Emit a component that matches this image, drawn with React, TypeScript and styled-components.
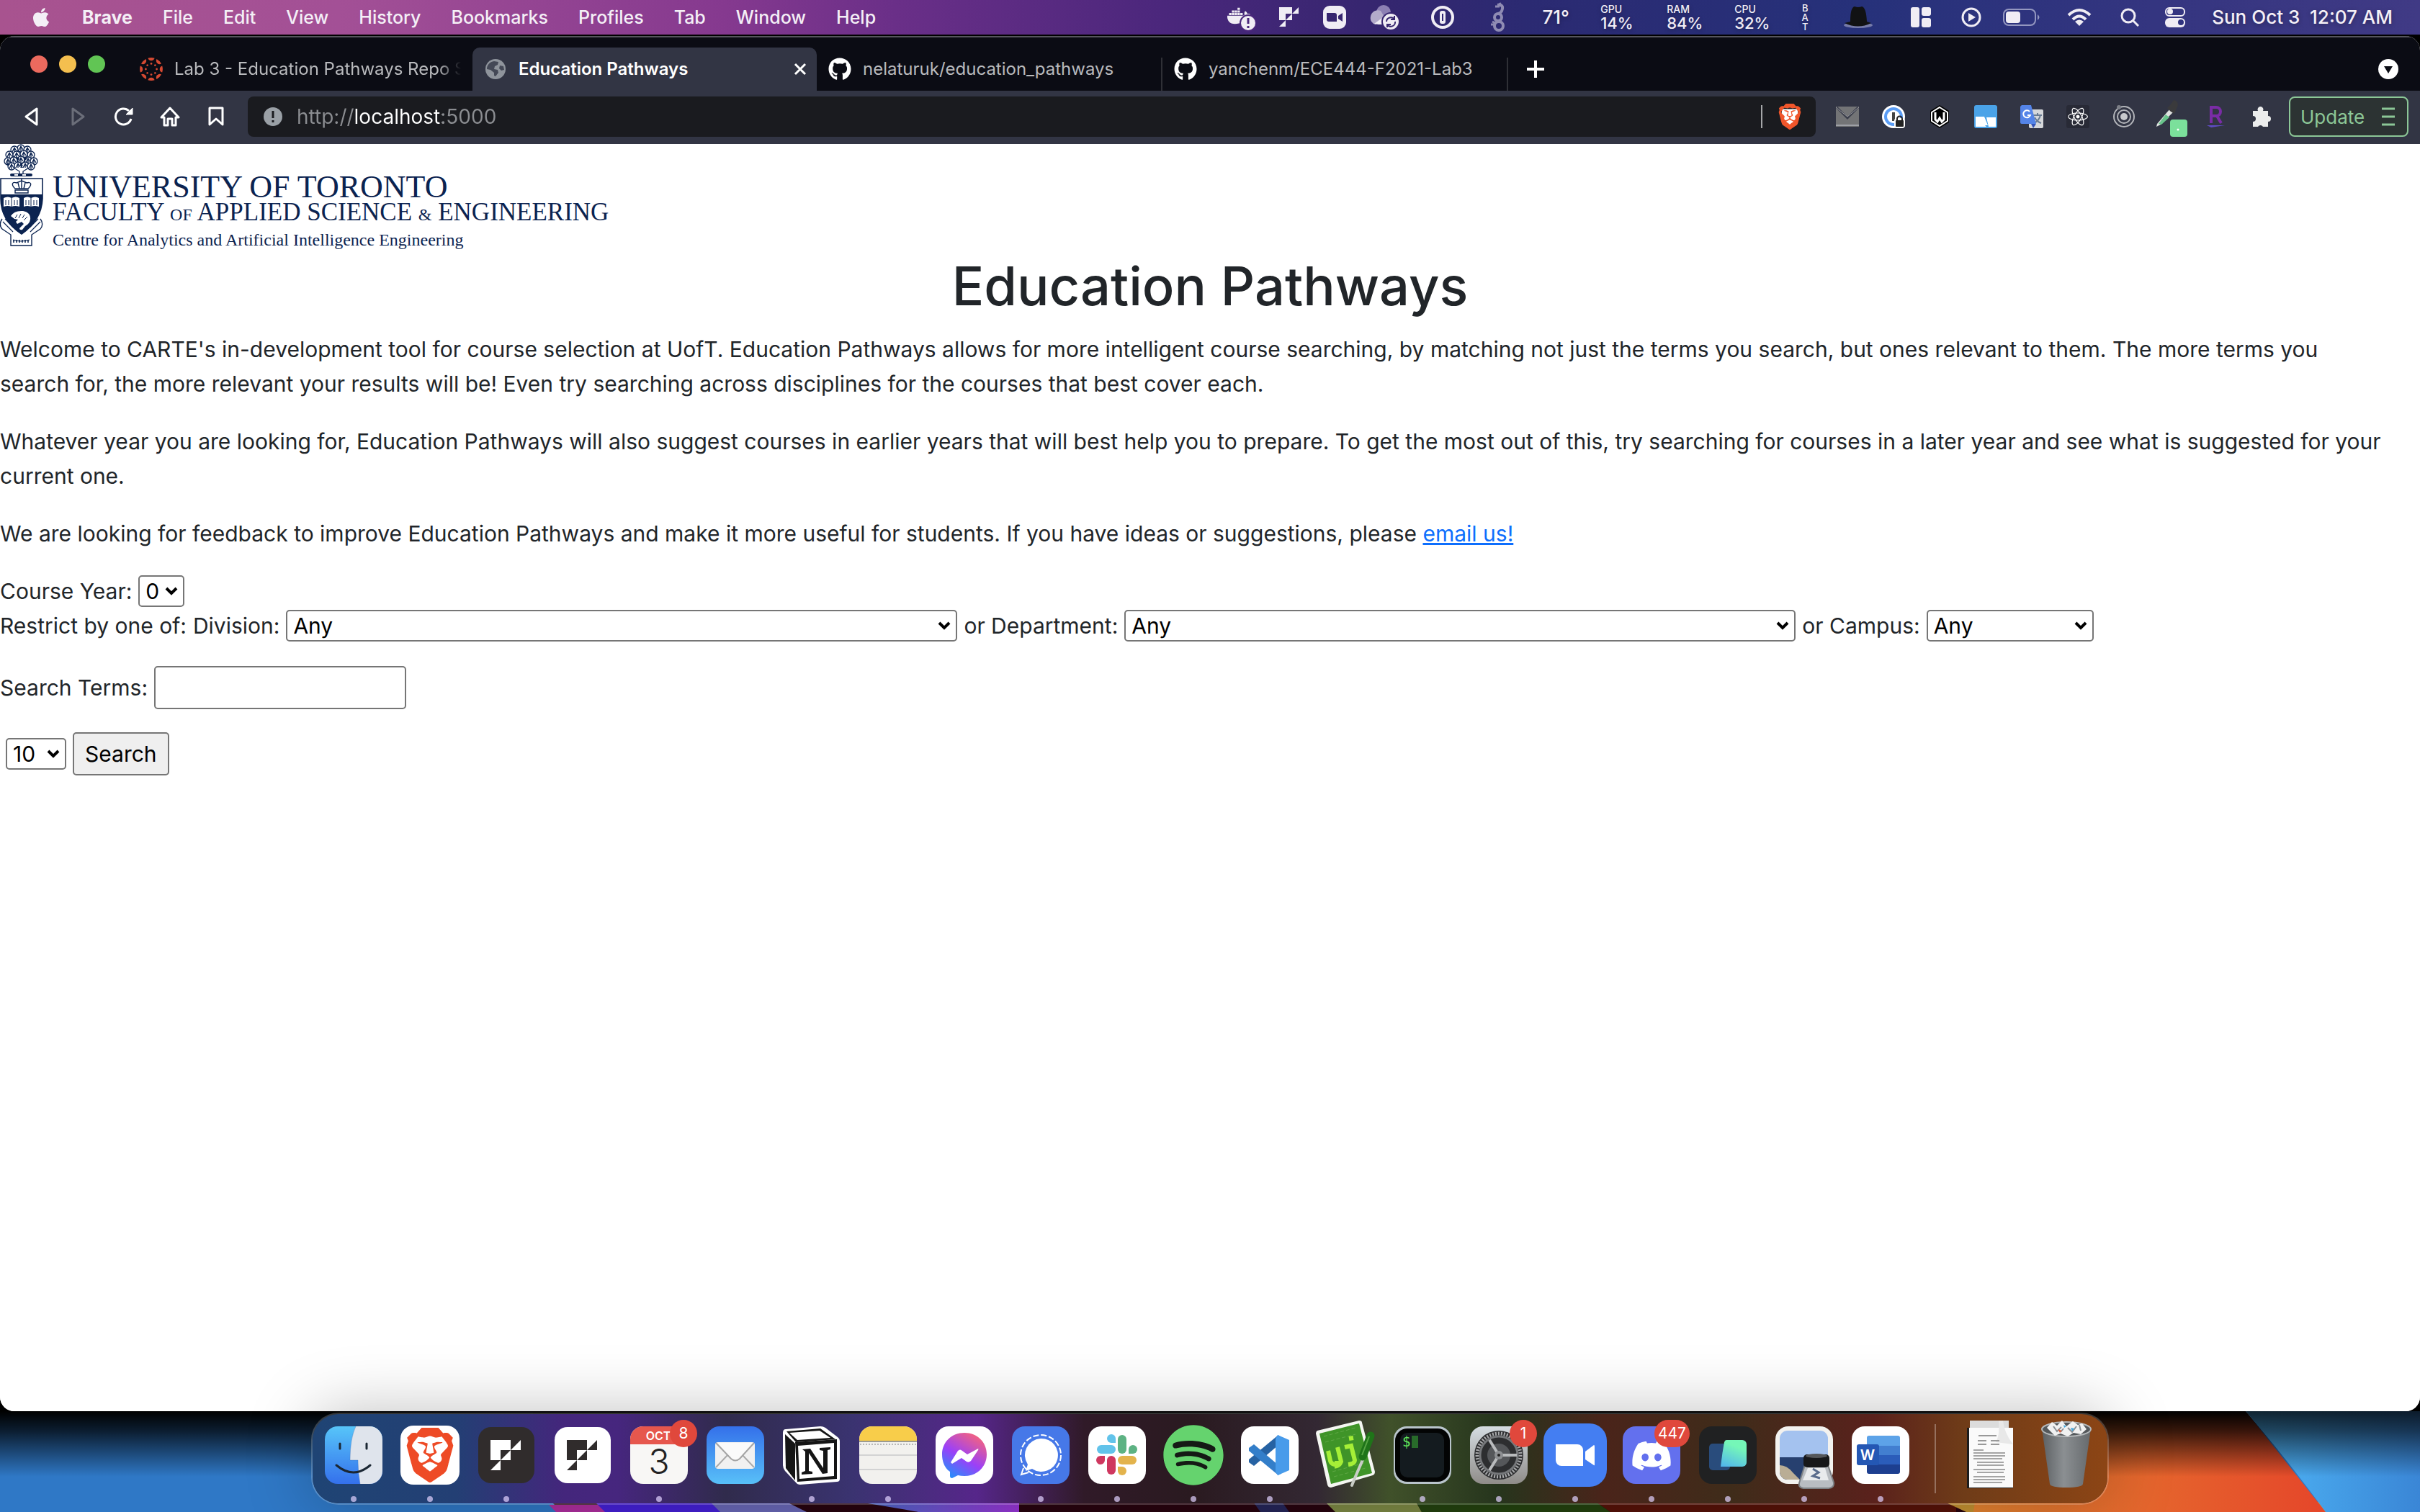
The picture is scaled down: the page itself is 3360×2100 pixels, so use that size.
import React from "react";
import styled, { createGlobalStyle } from "styled-components";
import { FaApple, FaGithub, FaSpotify, FaDiscord, FaReact, FaDocker } from "react-icons/fa";
import { SiBrave } from "react-icons/si";

const SANS = 'Inter, "Noto Sans", "Liberation Sans", sans-serif';
const SERIF = '"Liberation Serif", "DejaVu Serif", serif';
const NAVY = "#0b2350";

const GlobalStyle = createGlobalStyle`
  *, *::before, *::after { box-sizing: border-box; }
  html, body { margin: 0; background: #05070d; }
  body { font-family: ${SANS}; }
  button, input, select { font: inherit; color: inherit; margin: 0; }
  button { background: none; border: 0; padding: 0; cursor: default; }
  svg { display: block; flex: none; }
`;

/* ---------- desktop ---------- */

const Desktop = styled.div`
  min-height: 100vh;
  display: grid;
  grid-template-rows: auto 1fr auto;
  background: #000;
  isolation: isolate;
`;

const MenuBar = styled.header`
  height: 48px;
  display: flex;
  align-items: stretch;
  justify-content: space-between;
  margin-bottom: 2px;
  padding: 0 38px 0 42px;
  color: #f4eff6;
  font-size: 26px;
  line-height: 46px;
  text-shadow: 0 2px 6px rgba(0, 0, 0, 0.3);
  background: linear-gradient(
    90deg,
    #a8538f 0%,
    #a35096 14%,
    #85398f 30%,
    #6a2f88 37%,
    #4b277c 48%,
    #35266f 57%,
    #2b2a72 63%,
    #26317a 77%,
    #343580 89%,
    #403a85 100%
  );
`;

const Menus = styled.nav`
  display: flex;
  align-items: center;
  gap: 42px;
`;

const MenuButton = styled.button<{ $bold?: boolean }>`
  font-size: 25px;
  font-weight: ${(p) => (p.$bold ? 700 : 500)};
`;

const Status = styled.div`
  display: flex;
  align-items: center;
  font-weight: 500;
`;

const StatusItem = styled.div<{ $width: number; $faded?: boolean }>`
  width: ${(p) => p.$width}px;
  height: 46px;
  display: flex;
  align-items: center;
  justify-content: center;
  white-space: nowrap;
  opacity: ${(p) => (p.$faded ? 0.5 : 1)};
`;

const Gauge = styled.div`
  display: flex;
  flex-direction: column;
  width: 50px;
  font-size: 22px;
  line-height: 22px;
  small {
    font-size: 14px;
    line-height: 16px;
  }
`;

const Stacked = styled.div`
  display: flex;
  flex-direction: column;
  align-items: center;
  font-size: 13px;
  line-height: 13px;
`;

const Clock = styled.time`
  padding-left: 18px;
  white-space: pre;
`;

/* ---------- browser window ---------- */

const Window = styled.main`
  display: flex;
  flex-direction: column;
  border-radius: 20px;
  overflow: hidden;
  background: #fff;
`;

const TabStrip = styled.div`
  height: 76px;
  display: flex;
  align-items: flex-end;
  background: #0b0c14;
  border-top: 2px solid #55555c;
`;

const Lights = styled.div`
  height: 74px;
  width: 178px;
  display: flex;
  align-items: center;
  gap: 16px;
  padding-left: 42px;
`;

const Light = styled.button<{ $color: string }>`
  width: 24px;
  height: 24px;
  border-radius: 50%;
  background: ${(p) => p.$color};
`;

const Tab = styled.div<{ $active?: boolean }>`
  width: 478px;
  height: 60px;
  display: flex;
  align-items: center;
  padding: 0 ${(p) => (p.$active ? 14 : 16)}px 0 ${(p) => (p.$active ? 18 : 16)}px;
  gap: ${(p) => (p.$active ? 18 : 16)}px;
  border-radius: 10px 10px 0 0;
  color: ${(p) => (p.$active ? "#fff" : "#b9babd")};
  background: ${(p) => (p.$active ? "#323544" : "transparent")};
`;

const TabTitle = styled.button<{ $fade?: boolean; $strong?: boolean }>`
  flex: 1;
  min-width: 0;
  overflow: hidden;
  text-align: left;
  white-space: nowrap;
  font-size: 24px;
  line-height: 32px;
  font-weight: ${(p) => (p.$strong ? 600 : 400)};
  mask-image: ${(p) => (p.$fade ? "linear-gradient(90deg, #000 92%, transparent)" : "none")};
`;

const TabRule = styled.span`
  width: 2px;
  height: 46px;
  background: #2f3036;
`;

const StripEnd = styled.div`
  flex: 1;
  height: 60px;
  display: flex;
  align-items: center;
  justify-content: space-between;
  padding: 0 30px 0 26px;
`;

const Toolbar = styled.div`
  height: 74px;
  display: flex;
  align-items: center;
  padding: 0 16px 2px 12px;
  background: #323544;
`;

const ToolButton = styled.button`
  width: 64px;
  height: 56px;
  display: flex;
  align-items: center;
  justify-content: center;
`;

const AddressBar = styled.div`
  flex: 1;
  height: 56px;
  display: flex;
  align-items: center;
  margin: 0 12px;
  padding: 0 18px 0 22px;
  gap: 20px;
  border-radius: 8px;
  background: #1a1b1f;
`;

const Address = styled.input`
  flex: 1;
  min-width: 0;
  height: 40px;
  padding: 0;
  border: 0;
  outline: 0;
  font-size: 28px;
  -webkit-text-fill-color: transparent;
  background: linear-gradient(90deg, #8b8d91 0 80px, #fff 80px 202px, #8b8d91 202px);
  -webkit-background-clip: text;
  background-clip: text;
`;

const AddressRule = styled.span`
  width: 2px;
  height: 32px;
  background: #a5a6a9;
`;

const UpdateButton = styled.button`
  height: 56px;
  width: 166px;
  display: flex;
  align-items: center;
  justify-content: space-between;
  padding: 0 16px 0 14px;
  margin-left: 5px;
  border: 2px solid #8cc797;
  border-radius: 8px;
  color: #8cc797;
  background: #2c3333;
  font-size: 26px;
`;

/* ---------- page ---------- */

const Page = styled.div`
  flex: 1;
  background: #fff;
  color: #212529;
  font-size: 30px;
  line-height: 48px;
`;

const Logo = styled.div`
  height: 149px;
  display: flex;
  gap: 13px;
  color: ${NAVY};
  font-family: ${SERIF};
`;

const LogoLines = styled.div`
  display: flex;
  flex-direction: column;
  padding-top: 42px;
  white-space: nowrap;
`;

const LogoLine = styled.span<{ $size: number }>`
  font-size: ${(p) => p.$size}px;
  line-height: 35px;
  small {
    font-size: 24px;
  }
`;

const Title = styled.h1`
  margin: 0 0 16px;
  font-size: 74px;
  line-height: 96px;
  font-weight: 500;
  text-align: center;
`;

const Paragraph = styled.p`
  margin: 0 0 32px;
  padding-right: 40px;
`;

const Link = styled.a`
  color: #0d6efd;
`;

const FormRow = styled.div<{ $gapAfter?: boolean; $indent?: boolean }>`
  display: flex;
  align-items: center;
  gap: 9px;
  min-height: 48px;
  margin-bottom: ${(p) => (p.$gapAfter ? 32 : 0)}px;
  padding-left: ${(p) => (p.$indent ? 8 : 0)}px;
  white-space: nowrap;
`;

const SelectBox = styled.span<{ $width: number }>`
  width: ${(p) => p.$width}px;
  display: grid;
  align-items: center;
  > * {
    grid-area: 1 / 1;
  }
  svg {
    justify-self: end;
    margin-right: 8px;
    pointer-events: none;
  }
`;

const Select = styled.select`
  width: 100%;
  height: 44px;
  padding: 0 8px;
  line-height: 40px;
  appearance: none;
  border: 2px solid #767676;
  border-radius: 5px;
  background: #fff;
  color: #000;
`;

const TextBox = styled.input`
  width: 350px;
  height: 60px;
  padding: 2px 4px;
  border: 2px solid #767676;
  border-radius: 5px;
  background: #fff;
`;

const SubmitButton = styled.button`
  height: 60px;
  padding: 0 15px;
  border: 2px solid #767676;
  border-radius: 5px;
  background: #efefef;
  color: #000;
`;

/* ---------- dock ---------- */

const DockArea = styled.footer`
  height: 140px;
  display: grid;
  justify-items: center;
  > * {
    grid-area: 1 / 1;
  }
`;

const Wallpaper = styled.svg`
  width: 100%;
  height: 140px;
  z-index: -1;
`;

const Dock = styled.div`
  height: 128px;
  margin-top: 2px;
  display: flex;
  padding: 0 4px;
  border: 2px solid rgba(255, 255, 255, 0.2);
  border-radius: 38px;
  box-shadow: 0 0 90px rgba(0, 0, 0, 0.26);
  background: linear-gradient(
    90deg,
    #1f4474 0%,
    #233f74 8%,
    #44267c 14%,
    #46267e 17%,
    #302b4c 23%,
    #3a3370 30%,
    #56268a 37%,
    #301a28 43%,
    #2a1a20 49%,
    #332833 56%,
    #40512a 60%,
    #26351d 66%,
    #4a241a 72%,
    #3f2c1a 79%,
    #5a211c 87%,
    #6f3c18 92%,
    #8c4515 100%
  );
  background-clip: padding-box;
  background-color: #14121a;
`;

const DockItem = styled.button`
  position: relative;
  width: 106px;
  display: flex;
  flex-direction: column;
  align-items: center;
  justify-content: flex-start;
  padding-top: 9px;
`;

const Running = styled.span`
  width: 8px;
  height: 8px;
  margin-top: 9px;
  border-radius: 50%;
  background: rgba(225, 210, 255, 0.7);
`;

const Badge = styled.span`
  position: absolute;
  top: 8px;
  right: 0;
  min-width: 38px;
  height: 38px;
  padding: 0 5px;
  border-radius: 19px;
  background: #e0483c;
  color: #fff;
  font-size: 21px;
  line-height: 38px;
  text-align: center;
`;

const DockRule = styled.span`
  width: 2px;
  height: 96px;
  margin: 14px 22px 0;
  background: rgba(255, 255, 255, 0.3);
`;

/* ---------- drawings ---------- */

const Glyph = ({ w, h = w, box, children }: any) => (
  <svg width={w} height={h} viewBox={box || `0 0 ${w} ${h}`} fill="none">
    {children}
  </svg>
);

const FMark = ({ x = 0, y = 0, u = 9, color = "#f0edf4" }) => (
  <path
    transform={`translate(${x} ${y}) scale(${u})`}
    fill={color}
    d="M0 0H2V1H1V2H0ZM2 1V2H1ZM3 0V1H2ZM1 2V3H0Z"
  />
);

const Lion = ({ width = 34, x = 0, y = 0, color = "#f1562b" }) => (
  <g transform={`translate(${x} ${y})`}>
    <path transform={`scale(${width / 24})`} fill="#fff" d="M5 5h14l1 6-3 8-5 3-5-3-3-8z" />
    <SiBrave size={width} color={color} />
  </g>
);

const Canvas = () => (
  <Glyph w={32} box="-16 -16 32 32">
    {[0, 45, 90, 135, 180, 225, 270, 315].map((a) => (
      <g key={a} transform={`rotate(${a})`} fill="#d64a32">
        <path d="M-4.6 -15.2A16 16 0 0 1 4.6 -15.2A4.8 4.8 0 0 1 -4.6 -15.2Z" />
        <circle cy="-7.6" r="1.4" />
      </g>
    ))}
  </Glyph>
);

const Globe = () => (
  <Glyph w={28}>
    <circle cx="14" cy="14" r="14" fill="#8f949c" />
    <path d="M12 3l6 1-1 4-4 2-1 4 5 1 1 4-4 5-2-1v-4l-5-4-5-1c0-6 4-10 10-11z" fill="#444856" />
    <path d="M20 9l5 1 1 5-4 1-3-3z" fill="#444856" />
  </Glyph>
);

const Chevron = () => (
  <Glyph w={20} h={14}>
    <path d="M3 3L10 10L17 3" stroke="#000" strokeWidth="4" />
  </Glyph>
);

const Crest = () => {
  const leaves: [number, number][] = [
    [29, 6], [20, 8], [38, 8], [13, 15], [23, 15], [33, 14], [43, 15], [11, 24], [19, 23],
    [29, 22], [39, 23], [47, 24], [16, 31], [25, 30], [35, 30], [43, 31],
  ];
  return (
    <Glyph w={60} h={144}>
      <g stroke={NAVY} strokeWidth="1.3" fill="#fff">
        {leaves.map(([x, y], i) => (
          <g key={i}>
            <circle cx={x} cy={y} r="5" />
            <path d={`M${x - 3} ${y + 3}l3-6 3 5M${x} ${y - 3}v7`} />
          </g>
        ))}
        <path d="M19 33l8 5v5h5v-5l8-5" />
      </g>
      <path d="M22 17l5 3-2 4zM34 18l4 2-4 4zM9 26l5 2-3 3zM29 26l3 4-5 1z" fill={NAVY} />
      <rect x="14" y="41" width="31" height="4" rx="2" fill={NAVY} />
      <path d="M20 43h5M31 43h5" stroke="#fff" strokeWidth="2" />
      <path d="M3 104c-3 4-4 10 0 14l12 8v15h29v-15l12-8c4-4 3-10 0-14" stroke={NAVY} strokeWidth="1.4" fill="#fff" />
      <path d="M4 108l14 14M56 108l-14 14M7 104l12 12M53 104l-12 12M18 133q11 4 23 0" stroke={NAVY} strokeWidth="1.2" />
      <path d="M19 137v-4m4 4v-4m4 4v-4m4 4v-4m4 4v-4m4 4v-4" stroke={NAVY} strokeWidth="1.6" />
      <path d="M1 48H59V76C58 98 46 114 30 125C13 114 1 98 1 76Z" fill="#fff" stroke={NAVY} strokeWidth="1.6" />
      <path d="M1 70H59V76C58 98 46 114 30 125C13 114 1 98 1 76Z" fill={NAVY} />
      <g stroke={NAVY} strokeWidth="1.4">
        <path d="M21 62c-6-6-4-10 2-8l7-3 7 3c6-2 8 2 2 8z" />
        <path d="M21 64h18v4H21zM30 50v12M25 54l2 8M35 54l-2 8M29 49h2" />
      </g>
      <path d="M5 75q6-3 11 0q6-3 11 0v12q-6-2-11 0q-5-2-11 0zM33 75q5-3 10 0q6-3 11 0v12q-6-2-11 0q-5-2-10 0z" fill="#fff" />
      <path d="M16 75v12M43 75v12M8 78v7m4-7v7m8-7v7m4-7v7m12-7v7m4-7v7m7-7v7m4-7v7" stroke={NAVY} strokeWidth="1" />
      <path d="M15 100q5-8 17-7q11 2 10 12q-1 6-7 9l-4 5q-4 1-4-2l6-6-3-3-6 3-2-3 3-3-5-1z" fill="#fff" />
      <path d="M24 98l-3 5M29 97l-3 6M34 98l-3 5M38 101l-5 5" stroke={NAVY} strokeWidth="1" />
    </Glyph>
  );
};

const Seahorse = () => (
  <Glyph w={24} h={42}>
    <g stroke="#f0edf4" strokeWidth="4" fill="none">
      <path d="M11 4q8-1 7 5t-6 7" />
      <circle cx="12" cy="21" r="5" />
      <circle cx="13" cy="33" r="6" />
      <path d="M8 6h6M14 1l2 4M4 27l4 2M2 31h4" strokeWidth="3" />
    </g>
  </Glyph>
);

const StatusIcons = {
  docker: (
    <Glyph w={40}>
      <FaDocker size={32} color="#f0edf4" y={2} />
      <circle cx="29" cy="28" r="11" fill="#f0edf4" stroke="#4b277c" strokeWidth="2" />
      <path d="M29 21v8M29 32v3" stroke="#4b277c" strokeWidth="3" />
    </Glyph>
  ),
  zoom: (
    <Glyph w={32}>
      <rect width="32" height="32" rx="9" fill="#f0edf4" />
      <path d="M5 10h11a3 3 0 0 1 3 3v9H8a3 3 0 0 1-3-3zM21 14l6-4v12l-6-4z" fill="#37266f" />
    </Glyph>
  ),
  cloud: (
    <Glyph w={42} h={36}>
      <circle cx="19" cy="11" r="10" fill="#8d80b3" />
      <path d="M1 17a10 10 0 0 1 14-8l6 10-13 9a9 9 0 0 1-7-11z" fill="#b3abca" />
      <path d="M6 27l15-11 8 4v8H12z" fill="#f0edf4" />
      <circle cx="29" cy="24" r="12" fill="#f0edf4" stroke="#37266f" strokeWidth="2" />
      <path d="M23 24a6 6 0 0 1 11-3m1 3a6 6 0 0 1-11 4M34 16v5h-5M24 32v-4h5" stroke="#37266f" strokeWidth="2" />
    </Glyph>
  ),
  onePassword: (
    <Glyph w={32}>
      <circle cx="16" cy="16" r="14" stroke="#f0edf4" strokeWidth="4" />
      <rect x="12" y="7" width="8" height="18" rx="3" fill="#f0edf4" />
      <path d="M16 11v10" stroke="#2f2672" strokeWidth="2" />
    </Glyph>
  ),
  hat: (
    <Glyph w={42} h={34}>
      <ellipse cx="21" cy="28" rx="20" ry="4" fill="#767baa" />
      <path d="M10 23q0-20 6-21q5 2 10 0q6 1 7 21l6 2q-18 9-37 0z" fill="#111214" />
    </Glyph>
  ),
  layout: (
    <Glyph w={28}>
      <rect width="12" height="28" rx="3" fill="#f0edf4" />
      <rect x="15" width="13" height="12" rx="3" fill="#f0edf4" />
      <rect x="15" y="15" width="13" height="13" rx="3" fill="#f0edf4" />
    </Glyph>
  ),
  play: (
    <Glyph w={28}>
      <circle cx="14" cy="14" r="12" stroke="#f0edf4" strokeWidth="3" />
      <path d="M10 8l10 6-10 6z" fill="#f0edf4" />
    </Glyph>
  ),
  battery: (
    <Glyph w={52} h={24}>
      <rect x="1" y="1" width="44" height="22" rx="7" stroke="#9497c0" strokeWidth="2" />
      <rect x="4" y="4" width="20" height="16" rx="4" fill="#f0edf4" />
      <path d="M48 8q5 4 0 8z" fill="#9497c0" />
    </Glyph>
  ),
  wifi: (
    <Glyph w={34} h={26}>
      <path d="M2 10q15-14 30 0M8 16q9-9 18 0" stroke="#f0edf4" strokeWidth="4" />
      <path d="M11 19q6-5 12 0l-6 6z" fill="#f0edf4" />
    </Glyph>
  ),
  search: (
    <Glyph w={26}>
      <circle cx="11" cy="11" r="9" stroke="#f0edf4" strokeWidth="3" />
      <path d="M17 17l8 8" stroke="#f0edf4" strokeWidth="3" />
    </Glyph>
  ),
  control: (
    <Glyph w={28}>
      <rect x="1" y="1" width="26" height="11" rx="5" stroke="#f0edf4" strokeWidth="2" />
      <circle cx="7" cy="6" r="4" fill="#f0edf4" />
      <rect y="15" width="28" height="13" rx="6" fill="#f0edf4" />
      <circle cx="22" cy="21" r="4" fill="#2f327e" />
    </Glyph>
  ),
};

const extensions: { name: string; icon: React.ReactNode }[] = [
  {
    name: "Mail",
    icon: (
      <Glyph w={32} h={28}>
        <rect width="32" height="28" fill="#737476" />
        <path d="M0 26h32" stroke="#9ea0a6" strokeWidth="2" />
        <path d="M1 1l15 15L31 1" stroke="#3a3d4a" strokeWidth="3" />
        <path d="M0 1l16 13L32 1" stroke="#9a9ba0" strokeWidth="1" />
      </Glyph>
    ),
  },
  {
    name: "1Password",
    icon: (
      <Glyph w={32}>
        <circle cx="16" cy="16" r="16" fill="#fff" />
        <circle cx="16" cy="16" r="11" stroke="#5b9df5" strokeWidth="4" />
        <rect x="14" y="10" width="4" height="12" fill="#444" />
        <rect x="17" y="18" width="15" height="14" rx="4" fill="#fff" />
        <rect x="19" y="21" width="11" height="9" rx="1" fill="#222" />
        <path d="M21 22v-3a3 3 0 0 1 7 0v3" stroke="#222" strokeWidth="2" />
      </Glyph>
    ),
  },
  {
    name: "Wappalyzer",
    icon: (
      <Glyph w={32}>
        <path d="M16 0l13 8v16l-13 8-13-8V8z" fill="#000" />
        <path d="M16 3l11 7v12l-11 7-11-7V10z" stroke="#fff" strokeWidth="2" />
        <path d="M10 10v10l3 3 3-5 3 5 3-3V10" stroke="#fff" strokeWidth="3" />
      </Glyph>
    ),
  },
  {
    name: "Files",
    icon: (
      <Glyph w={32}>
        <rect width="32" height="32" rx="3" fill="#4aa3e8" />
        <path d="M2 16h12l5 12h-4l2 2H2zM17 17h13v13H20z" fill="#fff" />
      </Glyph>
    ),
  },
  {
    name: "Translate",
    icon: (
      <Glyph w={32}>
        <rect x="12" y="6" width="20" height="26" rx="2" fill="#d5d7da" />
        <path d="M18 14h12M24 11v3M28 14q-2 8-9 11M20 17q3 6 9 8" stroke="#6a7c93" strokeWidth="2" />
        <path d="M2 0h13l7 26H2a2 2 0 0 1-2-2V2z" fill="#5484e8" />
        <path d="M15 26h7l-4 6z" fill="#3453b5" />
        <path d="M13 9a5 5 0 1 0 1 5h-4" stroke="#fff" strokeWidth="2" />
      </Glyph>
    ),
  },
  {
    name: "React",
    icon: (
      <Glyph w={32}>
        <rect width="32" height="32" rx="3" fill="#282a36" />
        <FaReact size={28} x={2} y={2} color="#fff" />
      </Glyph>
    ),
  },
  {
    name: "Rings",
    icon: (
      <Glyph w={32}>
        <circle cx="16" cy="16" r="14" stroke="#b3b5ba" strokeWidth="2" />
        <circle cx="16" cy="16" r="9" stroke="#b3b5ba" strokeWidth="2" />
        <circle cx="16" cy="16" r="5" fill="#c8cacd" />
        <circle cx="9" cy="3" r="3" fill="#7c7f87" />
      </Glyph>
    ),
  },
  {
    name: "Colour picker",
    icon: (
      <Glyph w={48} h={56}>
        <path d="M6 38L24 17l5 4L11 39l-6 3z" fill="#dfe3e0" />
        <path d="M8 38l10-13 5 4-11 10z" fill="#69c48b" />
        <path d="M20 16l5 5 5 3 2-5 3-7q0-6-6-7l-5 7z" fill="#3a3a3c" />
        <rect x="24" y="32" width="24" height="24" rx="4" fill="#7be09b" />
        <circle cx="35" cy="46" r="1.5" fill="#fff" />
      </Glyph>
    ),
  },
  {
    name: "R",
    icon: (
      <Glyph w={26} h={30}>
        <path d="M6 24V2h7a6 6 0 0 1 0 12H7m7 0l6 10" stroke="#7a2ca6" strokeWidth="4" />
        <path d="M0 27h25l-19 3z" fill="#5f4bc4" />
      </Glyph>
    ),
  },
  {
    name: "Extensions",
    icon: (
      <Glyph w={30}>
        <path
          d="M2 7h7a4 4 0 1 1 7 0h7v7a4 4 0 1 1 0 8v7h-7a4 4 0 0 0-7 0H2v-7a4 4 0 0 0 0-8z"
          fill="#eceded"
        />
      </Glyph>
    ),
  },
];

const Tile = ({ fill, children, inset = 8, rx = 18 }: any) => (
  <svg width="96" height="96" viewBox="0 0 96 96" fill="none">
    <rect x={inset} y={inset} width={96 - 2 * inset} height={96 - 2 * inset} rx={rx} fill={fill} />
    {children}
  </svg>
);

const Fade = ({ id, from, to, x2 = 0, y2 = 1 }: any) => (
  <linearGradient id={id} x1="0" y1="0" x2={x2} y2={y2}>
    <stop stopColor={from} />
    <stop offset="1" stopColor={to} />
  </linearGradient>
);

type DockApp = { name: string; running?: boolean; badge?: string; icon: React.ReactNode };

const apps: DockApp[] = [
  {
    name: "Finder",
    running: true,
    icon: (
      <Tile fill="url(#finder)">
        <Fade id="finder" from="#57c5f9" to="#3470ec" />
        <path d="M51 8H70a18 18 0 0 1 18 18V70a18 18 0 0 1-18 18H57q-3-15-3-33H43Q43 25 51 8z" fill="#dfe4ec" />
        <path d="M51 8Q43 25 43 55h11q0 18 3 33" stroke="#3d6fb5" strokeOpacity=".35" />
        <path d="M29 32v7M66 32v7M24 62q24 20 47 0" stroke="#1b2733" strokeWidth="3" strokeLinecap="round" />
      </Tile>
    ),
  },
  {
    name: "Brave",
    running: true,
    icon: (
      <Tile fill="#fff" inset={7}>
        <Lion width={76} x={10} y={10} color="#ee4b26" />
      </Tile>
    ),
  },
  {
    name: "Frame",
    running: true,
    icon: (
      <Tile fill="#302c2c" inset={9}>
        <FMark x={26} y={27} u={14} color="#fff" />
      </Tile>
    ),
  },
  {
    name: "Frame Light",
    icon: (
      <Tile fill="#fff" inset={9}>
        <FMark x={26} y={27} u={14} color="#302c2c" />
      </Tile>
    ),
  },
  {
    name: "Calendar",
    running: true,
    badge: "8",
    icon: (
      <Tile fill="#f8f7f5">
        <path d="M8 33V26A18 18 0 0 1 26 8H70A18 18 0 0 1 88 26V33z" fill="#e6574d" />
        <text x="47" y="27" fontSize="16" fontWeight="600" fill="#fff" textAnchor="middle" fontFamily={SANS}>
          OCT
        </text>
        <text x="48" y="74" fontSize="48" fontWeight="300" fill="#222" textAnchor="middle" fontFamily={SANS}>
          3
        </text>
      </Tile>
    ),
  },
  {
    name: "Mail",
    icon: (
      <Tile fill="url(#mail)">
        <Fade id="mail" from="#3470ea" to="#58c0f8" />
        <rect x="20" y="30" width="55" height="37" rx="4" fill="#f1f1f1" />
        <path d="M21 65l18-19M74 65L56 46" stroke="#aaa" strokeWidth="2" />
        <path d="M21 31l21 22q6 5 12 0l20-22" stroke="#a4a4a4" strokeWidth="2" fill="#fafafa" />
      </Tile>
    ),
  },
  {
    name: "Notion",
    running: true,
    icon: (
      <svg width="96" height="96" viewBox="0 0 96 96" fill="none">
        <path d="M12 12l48-4q4 0 7 2l17 13q3 2 3 6v52q0 4-4 4l-51 4q-4 0-6-3L11 70q-3-4-3-8V17q0-5 4-5z" fill="#fff" />
        <path d="M13 15l47-4 21 15-55 4z" fill="#151515" />
        <path d="M17 17l42-3 15 10-46 3z" fill="#fff" />
        <path d="M11 19l14 13v51L12 66z" fill="#151515" />
        <path d="M25 30l58-4v55l-55 4z" fill="#151515" />
        <path d="M29 35l50-4v46l-48 4z" fill="#fff" />
        <path d="M35 40l11-1 18 27V42l-5-1v-3l15-1v3l-4 1v32l-7 1-19-29v25l5 1v3l-15 1v-3l5-2V43z" fill="#151515" />
      </svg>
    ),
  },
  {
    name: "Notes",
    running: true,
    icon: (
      <Tile fill="#f2f1ee">
        <path d="M8 28V26A18 18 0 0 1 26 8H70A18 18 0 0 1 88 26V28z" fill="#f8cd4a" />
        <path d="M8 29h80" stroke="#9c9a90" strokeWidth="2" />
        <path d="M9 33h78" stroke="#b8b8b8" strokeDasharray="2 2" strokeWidth="2" />
        <path d="M8 48h80M8 68h80" stroke="#d3d3d3" strokeWidth="2" />
      </Tile>
    ),
  },
  {
    name: "Messenger",
    icon: (
      <Tile fill="#fff">
        <linearGradient id="msg" x1=".2" y1="1" x2=".8" y2="0">
          <stop stopColor="#2290fb" />
          <stop offset=".45" stopColor="#9b40f8" />
          <stop offset="1" stopColor="#fb6576" />
        </linearGradient>
        <path d="M48 17c18 0 31 13 31 30S66 77 48 77q-5 0-9-1l-8 4q-3 0-3-3v-6C20 66 17 56 17 47c0-17 13-30 31-30z" fill="url(#msg)" />
        <path d="M29 58l10-16q3-3 6 0l7 5 15-8q1 0 0 2L57 56q-3 3-6 1l-7-5-13 8z" fill="#fff" />
      </Tile>
    ),
  },
  {
    name: "Signal",
    running: true,
    icon: (
      <Tile fill="#4678e8">
        <circle cx="48" cy="48" r="28" stroke="#fff" strokeWidth="2" strokeDasharray="8 3" />
        <path d="M24 66l-3 9 10-3" stroke="#fff" strokeWidth="2" />
        <path d="M48 25a23 23 0 1 1-12 42l-9 3 3-9A23 23 0 0 1 48 25z" fill="#fff" />
      </Tile>
    ),
  },
  {
    name: "Slack",
    running: true,
    icon: (
      <Tile fill="#fff">
        <g fill="#62c3ea">
          <rect x="20" y="34" width="26" height="12" rx="6" />
          <path d="M46 31h-6a6 6 0 1 1 6-6z" />
        </g>
        <g fill="#5db283">
          <rect x="49" y="20" width="12" height="26" rx="6" />
          <path d="M64 46v-6a6 6 0 1 1 6 6z" />
        </g>
        <g fill="#e3b34c">
          <rect x="49" y="49" width="26" height="12" rx="6" />
          <path d="M49 64h6a6 6 0 1 1-6 6z" />
        </g>
        <g fill="#cf375f">
          <rect x="34" y="49" width="12" height="26" rx="6" />
          <path d="M31 49v6a6 6 0 1 1-6-6z" />
        </g>
      </Tile>
    ),
  },
  {
    name: "Spotify",
    running: true,
    icon: (
      <svg width="96" height="96" viewBox="0 0 96 96">
        <circle cx="48" cy="48" r="42" fill="#151a15" />
        <FaSpotify size={86} x={5} y={5} color="#65d36e" />
      </svg>
    ),
  },
  {
    name: "Visual Studio Code",
    running: true,
    icon: (
      <Tile fill="#fff">
        <path d="M60 20v14L26 63l-7-5v-4z" fill="#2662a3" />
        <path d="M60 76V62L26 33l-7 5v4z" fill="#337ec9" />
        <path d="M59 20l16 7v42l-16 7z" fill="#489bea" />
        <path d="M59 20l-3 5v46l3 5 4-2V22z" fill="#489bea" />
      </Tile>
    ),
  },
  {
    name: "VimR",
    icon: (
      <svg width="96" height="96" viewBox="0 0 96 96" fill="none">
        <path d="M8 14L66 0q4 0 4 3l18 68q0 4-3 5L27 93q-4 0-5-4L6 18q0-3 2-4z" fill="#f5f7f2" />
        <path d="M11 18L66 4l18 69-57 15z" fill="#3f9428" />
        <path d="M17 22l44-12M19 30l42-11M29 71l44-12M31 78l44-12" stroke="#5fa845" strokeDasharray="5 3" />
        <path d="M23 42l3 14q2 6 10 5M36 37l5 20q-2 5-6 6v-7" stroke="#a6ef37" strokeWidth="6" />
        <path d="M46 37l9-2 5 20q0 5-9 6M52 25l6-1" stroke="#a6ef37" strokeWidth="6" />
        <path d="M73 50L60 80l-4 10" stroke="#c9cdc6" strokeWidth="4" strokeLinecap="round" />
        <path d="M82 21L71 50" stroke="#1f7419" strokeWidth="11" strokeLinecap="round" />
        <path d="M80 22L70 48" stroke="#57a544" strokeWidth="2" />
      </svg>
    ),
  },
  {
    name: "iTerm",
    running: true,
    icon: (
      <Tile fill="#b9c4cb">
        <rect x="10" y="11" width="76" height="74" rx="17" fill="#030404" />
        <rect x="17" y="17" width="61" height="62" rx="10" fill="#141b1f" />
        <text x="20" y="36" fontSize="19" fill="#63e55a" fontFamily='"DejaVu Sans Mono", monospace'>
          $
        </text>
        <rect x="33" y="21" width="9" height="17" fill="#286b2a" />
      </Tile>
    ),
  },
  {
    name: "System Preferences",
    running: true,
    badge: "1",
    icon: (
      <Tile fill="url(#prefs)">
        <Fade id="prefs" from="#d5dde2" to="#8f8c89" />
        <circle cx="48" cy="48" r="34" fill="#2d2e30" />
        <circle cx="48" cy="48" r="30" stroke="#a7a8aa" strokeWidth="5" strokeDasharray="2 2" />
        <circle cx="48" cy="48" r="26" stroke="#75777a" strokeWidth="3" />
        <circle cx="48" cy="48" r="16" fill="#55575a" />
        <path d="M48 48h25M48 48L35 27M48 48L35 69" stroke="#b9bbbd" strokeWidth="4" />
        <circle cx="48" cy="48" r="6" fill="#8d8f92" />
        <circle cx="48" cy="48" r="2" fill="#222" />
      </Tile>
    ),
  },
  {
    name: "Zoom",
    running: true,
    icon: (
      <Tile fill="#447ef2" inset={4} rx={24}>
        <path d="M21 33h30a8 8 0 0 1 8 8v22H29a8 8 0 0 1-8-8zM62 43l12-9q1 0 1 2v25q0 2-1 1l-12-8z" fill="#fff" />
      </Tile>
    ),
  },
  {
    name: "Discord",
    running: true,
    badge: "447",
    icon: (
      <Tile fill="#6370ee">
        <FaDiscord size={58} x={19} y={20} color="#fff" />
      </Tile>
    ),
  },
  {
    name: "Panes",
    running: true,
    icon: (
      <Tile fill="#202122">
        <Fade id="pane" from="#75f7b8" to="#4aa8f8" x2={-0.4} />
        <rect x="22" y="32" width="29" height="37" rx="5" fill="#294c7c" />
        <path d="M46 27h22a6 6 0 0 1 6 6v25a6 6 0 0 1-6 6H38q2-18 5-34 1-3 3-3z" fill="url(#pane)" />
      </Tile>
    ),
  },
  {
    name: "Preview",
    running: true,
    icon: (
      <Tile fill="#f3f2ef">
        <rect x="14" y="14" width="67" height="68" rx="11" fill="#a4c2ef" />
        <path d="M14 51h67v20a11 11 0 0 1-11 11H25a11 11 0 0 1-11-11z" fill="#27406f" />
        <path d="M14 62q10 0 18 10l10 10H25a11 11 0 0 1-11-11z" fill="#b9ad95" />
        <path d="M49 62h32l8 24q1 7-7 8H47q-7-1-6-7z" fill="#b9bdc2" stroke="#7d8185" strokeWidth="2" />
        <path d="M53 66h24l5 17H46z" fill="#e9ebed" />
        <path d="M60 67l8 5-8 5 10 3" stroke="#5a6c8c" strokeWidth="3" />
        <rect x="47" y="47" width="36" height="18" rx="5" fill="#17181a" />
        <ellipse cx="65" cy="49" rx="15" ry="3" fill="#55575a" />
      </Tile>
    ),
  },
  {
    name: "Word",
    running: true,
    icon: (
      <Tile fill="#fff">
        <path d="M32 21h40a3 3 0 0 1 3 3v11H29V24a3 3 0 0 1 3-3z" fill="#5da3e8" />
        <path d="M29 35h46v13H29z" fill="#427fd0" />
        <path d="M29 48h46v13H29z" fill="#2b5dba" />
        <path d="M29 61h46v10a3 3 0 0 1-3 3H32a3 3 0 0 1-3-3z" fill="#1d3f90" />
        <rect x="15" y="33" width="31" height="29" rx="3" fill="#2457b4" />
        <text x="30" y="55" fontSize="20" fontWeight="600" fill="#fff" textAnchor="middle" fontFamily={SANS}>
          W
        </text>
      </Tile>
    ),
  },
];

const DocumentIcon = (
  <svg width="96" height="96" viewBox="0 0 96 96" fill="none">
    <rect x="20" y="0" width="54" height="30" fill="#dcdcdc" />
    <rect x="16" y="10" width="64" height="84" fill="#1c1c1c" />
    <path d="M19 10h61v83H19z" fill="#fafafa" />
    <path d="M60 0q2 20-4 30l24 3q-12-15-14-33z" fill="#e8e8e8" />
    <path d="M32 21h25M31 28h12m6 0h12M31 33h12m6 0h12" stroke="#999" strokeWidth="2" />
    <path
      d="M25 41h14M25 45h44M25 49h44M25 53h40M30 58h37M30 62h37M25 68h44M30 72h37M25 78h44M25 82h44M25 86h40"
      stroke="#a5a5a5"
      strokeWidth="2"
    />
  </svg>
);

const TrashIcon = (
  <svg width="96" height="96" viewBox="0 0 96 96" fill="none">
    <linearGradient id="can" x1="0" y1="0" x2="1" y2="0">
      <stop stopColor="#5c6063" />
      <stop offset=".45" stopColor="#8b8f92" />
      <stop offset="1" stopColor="#65696c" />
    </linearGradient>
    <path d="M14 11L25 88q1 5 23 5t23-5L82 11z" fill="url(#can)" />
    <ellipse cx="48" cy="12" rx="34" ry="10" fill="#54585b" stroke="#b5b8ba" strokeWidth="2" />
    <path d="M21 10l7-8 7 5 7-7 6 8 9-7 7 5 6-2 6 8-8 7-10-2-8 5-10-4-8 3z" fill="#f1f1f1" />
    <path d="M30 8l5 7 6-6M50 10l6 6 6-8M40 16l4-5M66 6l2 8" stroke="#8b9095" strokeWidth="2" />
    <path d="M36 12l6 2-3 3z" fill="#d9603f" />
    <path d="M54 10l5 1-3 4zM44 6l4 2-3 2z" fill="#43a7dd" />
  </svg>
);

const Scenery = () => (
  <Wallpaper viewBox="0 0 3360 140" preserveAspectRatio="none">
    <defs>
      <linearGradient id="dusk" x1="0" y1="0" x2="0" y2="1">
        <stop stopColor="#000" />
        <stop offset=".2" stopColor="#000" stopOpacity=".75" />
        <stop offset=".65" stopColor="#000" stopOpacity="0" />
      </linearGradient>
      <Fade id="ember" from="#e58430" to="#e5462a" x2={1} y2={0} />
      <Fade id="sky" from="#4fb6f6" to="#3a86d6" x2={1} y2={0} />
      <Fade id="violet" from="#4a6ac8" to="#9a35d8" x2={1} y2={0} />
    </defs>
    <rect width="3360" height="140" fill="#2f78c6" />
    <path d="M740 100L780 140H3000V0H740z" fill="#28040f" />
    <path d="M762 130h70l20 10h-80z" fill="#b02fa0" />
    <path d="M820 120h190l10 20H840z" fill="#4520d8" />
    <path d="M980 120h100l40 20h-120z" fill="#6a68b8" />
    <path d="M1205 128q60 10 70 12h140v-14z" fill="url(#violet)" />
    <path d="M1740 126h40l10 14h-40z" fill="#26265a" />
    <path d="M1840 126h126l8 14h-120z" fill="#7e8a45" />
    <path d="M1966 126h250l20 14h-262z" fill="#24430f" />
    <path d="M2216 126h500v14h-480z" fill="#571309" />
    <path d="M2700 126h600v14h-570z" fill="#c49232" />
    <path d="M2760 0H3118L3229 140H2740z" fill="url(#ember)" />
    <path d="M3118 0Q3170 60 3229 140H3360V0z" fill="url(#sky)" />
    <path d="M0 0H3118Q3170 60 3229 140H0z" fill="url(#dusk)" />
    <path d="M3118 0H3360V140H3229Q3170 60 3118 0z" fill="url(#dusk)" opacity=".8" />
  </Wallpaper>
);

/* ---------- app ---------- */

const menuNames = ["File", "Edit", "View", "History", "Bookmarks", "Profiles", "Tab", "Window", "Help"];

const gauges = [
  { label: "GPU", value: "14%", width: 88 },
  { label: "RAM", value: "84%", width: 96 },
  { label: "CPU", value: "32%", width: 92 },
];

const Dropdown = ({ id, width, value, label }: { id: string; width: number; value: string; label?: string }) => (
  <SelectBox $width={width}>
    <Select id={id} defaultValue={value} aria-label={label}>
      <option value={value}>{value}</option>
    </Select>
    <Chevron />
  </SelectBox>
);

export default function App() {
  return (
    <Desktop>
      <GlobalStyle />
      <MenuBar>
        <Menus>
          <FaApple size={30} />
          <MenuButton $bold>Brave</MenuButton>
          {menuNames.map((m) => (
            <MenuButton key={m}>{m}</MenuButton>
          ))}
        </Menus>
        <Status>
          <StatusItem $width={66}>{StatusIcons.docker}</StatusItem>
          <StatusItem $width={66}>
            <Glyph w={28}>
              <FMark />
            </Glyph>
          </StatusItem>
          <StatusItem $width={60}>{StatusIcons.zoom}</StatusItem>
          <StatusItem $width={80}>{StatusIcons.cloud}</StatusItem>
          <StatusItem $width={80}>{StatusIcons.onePassword}</StatusItem>
          <StatusItem $width={74} $faded>
            <Seahorse />
          </StatusItem>
          <StatusItem $width={86}>71°</StatusItem>
          {gauges.map((g) => (
            <StatusItem key={g.label} $width={g.width}>
              <Gauge>
                <small>{g.label}</small>
                {g.value}
              </Gauge>
            </StatusItem>
          ))}
          <StatusItem $width={54}>
            <Stacked>
              <span>B</span>
              <span>A</span>
              <span>T</span>
            </Stacked>
          </StatusItem>
          <StatusItem $width={94}>{StatusIcons.hat}</StatusItem>
          <StatusItem $width={80}>{StatusIcons.layout}</StatusItem>
          <StatusItem $width={60}>{StatusIcons.play}</StatusItem>
          <StatusItem $width={80}>{StatusIcons.battery}</StatusItem>
          <StatusItem $width={80}>{StatusIcons.wifi}</StatusItem>
          <StatusItem $width={60}>{StatusIcons.search}</StatusItem>
          <StatusItem $width={66}>{StatusIcons.control}</StatusItem>
          <Clock>{"Sun Oct 3  12:07 AM"}</Clock>
        </Status>
      </MenuBar>

      <Window>
        <TabStrip>
          <Lights>
            <Light $color="#ec6a5e" aria-label="Close window" />
            <Light $color="#f4bf4f" aria-label="Minimise window" />
            <Light $color="#61c554" aria-label="Zoom window" />
          </Lights>
          <Tab>
            <Canvas />
            <TabTitle $fade>Lab 3 - Education Pathways Repo Setup</TabTitle>
          </Tab>
          <Tab $active>
            <Globe />
            <TabTitle $strong>Education Pathways</TabTitle>
            <button aria-label="Close tab">
              <Glyph w={18}>
                <path d="M2 2L16 16M16 2L2 16" stroke="#fff" strokeWidth="3" />
              </Glyph>
            </button>
          </Tab>
          <Tab>
            <FaGithub size={32} color="#fff" />
            <TabTitle>nelaturuk/education_pathways</TabTitle>
          </Tab>
          <TabRule />
          <Tab>
            <FaGithub size={32} color="#fff" />
            <TabTitle>yanchenm/ECE444-F2021-Lab3</TabTitle>
          </Tab>
          <TabRule />
          <StripEnd>
            <button aria-label="New tab">
              <Glyph w={24}>
                <path d="M12 0V24M0 12H24" stroke="#fff" strokeWidth="4" />
              </Glyph>
            </button>
            <button aria-label="Search tabs">
              <Glyph w={28}>
                <circle cx="14" cy="14" r="14" fill="#fff" />
                <path d="M8 10H20L14 20Z" fill="#0b0c14" />
              </Glyph>
            </button>
          </StripEnd>
        </TabStrip>

        <Toolbar>
          <ToolButton aria-label="Back">
            <Glyph w={28}>
              <path d="M21 3V25L6 14Z" stroke="#fff" strokeWidth="3" strokeLinejoin="round" />
            </Glyph>
          </ToolButton>
          <ToolButton aria-label="Forward">
            <Glyph w={28}>
              <path d="M7 3V25L22 14Z" stroke="#6b6e79" strokeWidth="3" strokeLinejoin="round" />
            </Glyph>
          </ToolButton>
          <ToolButton aria-label="Reload">
            <Glyph w={28}>
              <path d="M24 17A11 11 0 1 1 21 6" stroke="#fff" strokeWidth="3" />
              <path d="M26 2V11H17Z" fill="#fff" stroke="#fff" strokeLinejoin="round" />
            </Glyph>
          </ToolButton>
          <ToolButton aria-label="Home">
            <Glyph w={28}>
              <path
                d="M2 15L14 2L26 15H22V26H17V17H11V26H6V15Z"
                stroke="#fff"
                strokeWidth="3"
                strokeLinejoin="round"
              />
            </Glyph>
          </ToolButton>
          <ToolButton aria-label="Bookmark">
            <Glyph w={22} h={28}>
              <path d="M2 2H20V25L11 17L2 25Z" stroke="#fff" strokeWidth="3" strokeLinejoin="round" />
            </Glyph>
          </ToolButton>
          <AddressBar>
            <Glyph w={26}>
              <circle cx="13" cy="13" r="13" fill="#9aa0a6" />
              <path d="M13 5V15M13 18V21" stroke="#1a1b1f" strokeWidth="3" />
            </Glyph>
            <Address aria-label="Address" defaultValue="http://localhost:5000" />
            <AddressRule />
            <Glyph w={36}>
              <Lion width={36} />
            </Glyph>
          </AddressBar>
          {extensions.map((e) => (
            <ToolButton key={e.name} aria-label={e.name}>
              {e.icon}
            </ToolButton>
          ))}
          <UpdateButton>
            Update
            <Glyph w={20} h={26}>
              <path d="M1 2H19M1 13H19M1 24H19" stroke="#8cc797" strokeWidth="3" />
            </Glyph>
          </UpdateButton>
        </Toolbar>

        <Page>
          <Logo>
            <Crest />
            <LogoLines>
              <LogoLine $size={44}>UNIVERSITY OF TORONTO</LogoLine>
              <LogoLine $size={35}>
                FACULTY <small>OF</small> APPLIED SCIENCE <small>&amp;</small> ENGINEERING
              </LogoLine>
              <LogoLine $size={24}>Centre for Analytics and Artificial Intelligence Engineering</LogoLine>
            </LogoLines>
          </Logo>
          <Title>Education Pathways</Title>
          <Paragraph>
            Welcome to CARTE's in-development tool for course selection at UofT. Education Pathways allows for more
            intelligent course searching, by matching not just the terms you search, but ones relevant to them. The
            more terms you search for, the more relevant your results will be! Even try searching across disciplines
            for the courses that best cover each.
          </Paragraph>
          <Paragraph>
            Whatever year you are looking for, Education Pathways will also suggest courses in earlier years that will
            best help you to prepare. To get the most out of this, try searching for courses in a later year and see
            what is suggested for your current one.
          </Paragraph>
          <Paragraph>
            We are looking for feedback to improve Education Pathways and make it more useful for students. If you
            have ideas or suggestions, please <Link href="#email">email us!</Link>
          </Paragraph>
          <form onSubmit={(e) => e.preventDefault()}>
            <FormRow>
              <label htmlFor="year">Course Year:</label>
              <Dropdown id="year" width={64} value="0" />
            </FormRow>
            <FormRow $gapAfter>
              <span>Restrict by one of:</span>
              <label htmlFor="division">Division:</label>
              <Dropdown id="division" width={932} value="Any" />
              <label htmlFor="department">or Department:</label>
              <Dropdown id="department" width={932} value="Any" />
              <label htmlFor="campus">or Campus:</label>
              <Dropdown id="campus" width={232} value="Any" />
            </FormRow>
            <FormRow $gapAfter>
              <label htmlFor="terms">Search Terms:</label>
              <TextBox id="terms" type="text" />
            </FormRow>
            <FormRow $indent>
              <Dropdown id="count" width={84} value="10" label="Number of results" />
              <SubmitButton type="submit">Search</SubmitButton>
            </FormRow>
          </form>
        </Page>
      </Window>

      <DockArea>
        <Scenery />
        <Dock>
          {apps.map((app) => (
            <DockItem key={app.name} aria-label={app.name}>
              {app.icon}
              {app.running && <Running />}
              {app.badge && <Badge>{app.badge}</Badge>}
            </DockItem>
          ))}
          <DockRule />
          <DockItem aria-label="Document">{DocumentIcon}</DockItem>
          <DockItem aria-label="Trash">{TrashIcon}</DockItem>
        </Dock>
      </DockArea>
    </Desktop>
  );
}
